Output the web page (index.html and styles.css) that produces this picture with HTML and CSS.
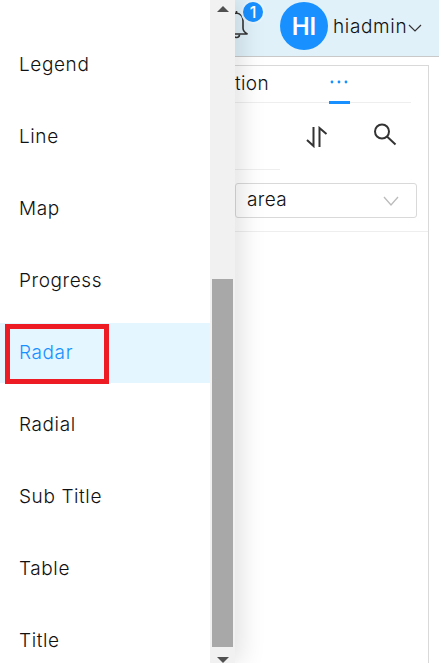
FILE: index.html
```html
<!DOCTYPE html>
<html lang="en">
<head>
<meta charset="utf-8">
<title>Widgets</title>
<link rel="stylesheet" href="styles.css">
</head>
<body>
<div class="page">
  <header class="topbar">
    <div class="bell">
      <svg class="bell-icon" width="30" height="32" viewBox="0 0 30 32" fill="none" stroke="#333" stroke-width="1.6">
        <path d="M12.500 3v2c-4 .5-6.500 4-6.500 8v7c0 2.500-1.500 4.500-4.500 6h22c-3-1.500-4.500-3.500-4.500-6v-7c0-4-2.500-7.500-6.500-8"/>
        <path d="M9.500 26.500c0 2 1 3 3 3s3-1 3-3"/>
      </svg>
      <span class="badge">1</span>
    </div>
    <div class="avatar">HI</div>
    <span class="username">hiadmin</span>
    <svg class="caret" width="14" height="8" viewBox="0 0 14 8" fill="none" stroke="#333" stroke-width="1.2"><path d="M1 1l6 6 6-6"/></svg>
  </header>
  <main class="content">
    <section class="card">
      <div class="tabs">
        <span class="tab">Animation</span>
        <span class="tab-more">
          <svg class="dots" width="21" height="6" viewBox="0 0 21 6" fill="#1890ff"><circle cx="3" cy="3" r="1.400"/><circle cx="10" cy="3" r="1.400"/><circle cx="17" cy="3" r="1.400"/></svg>
        </span>
      </div>
      <div class="tools">
        <svg class="sort" width="22" height="22" viewBox="0 0 22 22" fill="none" stroke="#333" stroke-width="2"><path d="M7.500 1v19L1 14"/><path d="M13.500 21V2l7 6"/></svg>
        <svg class="search" width="24" height="24" viewBox="0 0 24 24" fill="none" stroke="#333" stroke-width="2"><circle cx="9" cy="8.500" r="7"/><path d="M14 13.500l8.500 8"/></svg>
      </div>
      <div class="tools-rule"></div>
      <div class="select-row">
        <div class="select">
          <span>area</span>
          <svg width="16" height="10" viewBox="0 0 16 10" fill="none" stroke="#bbb" stroke-width="1.300"><path d="M1 1l7 8 7-8"/></svg>
        </div>
      </div>
    </section>
  </main>
  <aside class="menu">
    <ul class="menu-list">
      <li class="menu-item">Legend</li>
      <li class="menu-item">Line</li>
      <li class="menu-item">Map</li>
      <li class="menu-item">Progress</li>
      <li class="menu-item active"><span class="mark">Radar</span></li>
      <li class="menu-item">Radial</li>
      <li class="menu-item">Sub Title</li>
      <li class="menu-item">Table</li>
      <li class="menu-item">Title</li>
    </ul>
    <div class="scrollbar">
      <span class="arrow up"></span>
      <span class="track"><span class="thumb"></span></span>
      <span class="arrow down"></span>
    </div>
  </aside>
</div>
</body>
</html>
```
FILE: styles.css
```css
* { box-sizing: border-box; }
html, body { margin: 0; height: 100%; }
body { font-family: "Inter", "Liberation Sans", sans-serif; font-weight: 300; color: #111; overflow: hidden; }
.page { position: relative; width: 439px; height: 663px; overflow: hidden; background: #fff; }
.topbar { height: 57px; background: #e0f1fa; border-bottom: 1px solid #c9c9c9; display: flex; align-items: center; padding-left: 224px; }
.bell { position: relative; width: 56px; height: 56px; flex: none; }
.bell-icon { position: absolute; left: 0; top: 8px; }
.badge { position: absolute; left: 17px; top: 0; width: 24px; height: 24px; border-radius: 50%; background: #1890ff; border: 2px solid #e6f4fb; color: #fff; font-size: 16px; font-weight: 500; display: flex; align-items: center; justify-content: center; }
.avatar { width: 48px; height: 48px; border-radius: 50%; background: #1890ff; color: #fff; font-size: 24px; font-weight: 600; display: flex; align-items: center; justify-content: center; flex: none; margin-top: -4px; }
.username { margin-left: 5px; font-size: 19px; letter-spacing: .65px; margin-top: -4px; }
.caret { margin-top: 0; margin-left: 1px; }
.content { padding: 8px 10px 0 60px; }
.card { border: 1px solid #d9d9d9; border-bottom: 0; height: 600px; background: #fff; }
.tabs { height: 37px; margin-right: 17px; border-bottom: 1px solid #eee; position: relative; }
.tab { position: absolute; right: 142px; top: 0; font-size: 19px; line-height: 36px; letter-spacing: .35px; }
.tab-more { position: absolute; left: 268px; top: 0; width: 21px; height: 38px; border-bottom: 3px solid #1890ff; }
.dots { position: absolute; left: 0; top: 13px; }
.tools { height: 66px; display: flex; justify-content: flex-end; padding: 20px 31px 0 0; align-items: flex-start; }
.sort { margin: 3px 45px 0 0; }
.tools-rule { height: 1px; margin-right: 148px; background: #eee; }
.select-row { height: 62px; padding: 13px 12px 0 175px; border-bottom: 1px solid #eee; }
.select { width: 182px; height: 35px; margin-left: -1px; border: 1px solid #d9d9d9; border-radius: 3px; display: flex; align-items: center; justify-content: space-between; padding: 0 17px 0 11px; font-size: 19px; letter-spacing: .35px; line-height: 30px; }
.select span { margin-top: -1px; }
.menu { position: absolute; left: 0; top: 0; width: 235px; height: 663px; display: flex; background: #fff; box-shadow: 6px 0 24px rgba(0,0,0,.12); }
.menu-list { list-style: none; margin: 0; padding: 35px 0 0; width: 210px; display: flex; flex-direction: column; gap: 12px; }
.menu-item { height: 60px; display: flex; align-items: center; padding: 0 0 2px 19px; font-size: 19px; letter-spacing: .6px; flex: none; position: relative; }
.menu-item.active { background: #e4f6ff; color: #1890ff; }
.mark { display: flex; align-items: center; }
.mark::before { content: ""; box-sizing: border-box; position: absolute; left: 5px; top: 1px; width: 104px; height: 60px; border: 5px solid #ed1c24; }
.scrollbar { width: 25px; background: #f1f1f1; display: flex; flex-direction: column; align-items: center; }
.arrow { width: 0; height: 0; border-left: 6px solid transparent; border-right: 6px solid transparent; flex: none; }
.arrow.up { border-bottom: 6px solid #505050; margin-top: 6px; }
.arrow.down { border-top: 6px solid #505050; }
.track { flex: 1; width: 100%; display: block; padding: 267px 2px 10px; }
.thumb { display: block; height: 100%; background: #a8a8a8; }
```
